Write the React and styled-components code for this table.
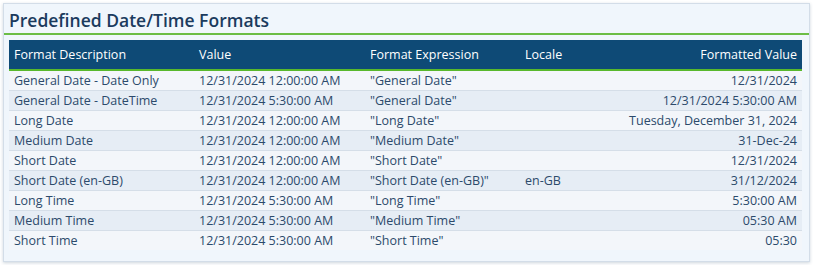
import styled, { createGlobalStyle } from 'styled-components';

const GlobalStyle = createGlobalStyle`
  body {
    margin: 0;
    background: #ffffff;
    font-family: "Open Sans", "Noto Sans", sans-serif;
  }
`;

const Page = styled.div`
  padding: 3px;
  width: 813px;
  box-sizing: border-box;
`;

const Panel = styled.div`
  width: 807px;
  height: 259px;
  box-sizing: border-box;
  background: #f0f6fc;
  border: 1px solid #d3dde8;
  box-shadow: 0 1px 3px rgba(60, 90, 120, 0.25);
`;

const Title = styled.h2`
  margin: 0;
  height: 31px;
  box-sizing: border-box;
  padding: 3px 0 0 5px;
  font-size: 17.5px;
  font-weight: 600;
  color: #1b3b5e;
  line-height: 26px;
  border-bottom: 2px solid #6cbd45;
`;

const Table = styled.table`
  margin: 5px 0 0 5px;
  width: 793px;
  border-collapse: collapse;
  font-size: 12.5px;
  color: #2c4a6b;
`;

const HeadRow = styled.tr`
  background: #0e4a76;
  border-bottom: 2px solid #58b82c;
`;

const Th = styled.th`
  height: 30px;
  padding: 0 5px 1px;
  text-align: ${(p) => (p.$right ? 'right' : 'left')};
  font-weight: 400;
  color: #ffffff;
  width: ${(p) => p.$w || 'auto'};
  box-sizing: border-box;
`;

const Row = styled.tr`
  background: ${(p) => (p.$alt ? '#e6edf5' : '#f3f6fa')};
  border-bottom: 1px solid #d5dee8;
  &:last-child {
    border-bottom: none;
  }
`;

const Td = styled.td`
  height: 19px;
  padding: 0 5px;
  line-height: 19px;
  white-space: nowrap;
  text-align: ${(p) => (p.$right ? 'right' : 'left')};
`;

const rows = [
  ['General Date - Date Only', '12/31/2024 12:00:00 AM', '"General Date"', '', '12/31/2024'],
  ['General Date - DateTime', '12/31/2024 5:30:00 AM', '"General Date"', '', '12/31/2024 5:30:00 AM'],
  ['Long Date', '12/31/2024 12:00:00 AM', '"Long Date"', '', 'Tuesday, December 31, 2024'],
  ['Medium Date', '12/31/2024 12:00:00 AM', '"Medium Date"', '', '31-Dec-24'],
  ['Short Date', '12/31/2024 12:00:00 AM', '"Short Date"', '', '12/31/2024'],
  ['Short Date (en-GB)', '12/31/2024 12:00:00 AM', '"Short Date (en-GB)"', 'en-GB', '31/12/2024'],
  ['Long Time', '12/31/2024 5:30:00 AM', '"Long Time"', '', '5:30:00 AM'],
  ['Medium Time', '12/31/2024 5:30:00 AM', '"Medium Time"', '', '05:30 AM'],
  ['Short Time', '12/31/2024 5:30:00 AM', '"Short Time"', '', '05:30'],
];

const App = () => {
  return (
    <Page>
      <GlobalStyle />
      <Panel>
        <Title>Predefined Date/Time Formats</Title>
        <Table>
          <thead>
            <HeadRow>
              <Th $w="185px">Format Description</Th>
              <Th $w="171px">Value</Th>
              <Th $w="155px">Format Expression</Th>
              <Th $w="100px">Locale</Th>
              <Th $right>Formatted Value</Th>
            </HeadRow>
          </thead>
          <tbody>
            {rows.map((r, i) => (
              <Row key={r[0]} $alt={i % 2 === 1}>
                <Td>{r[0]}</Td>
                <Td>{r[1]}</Td>
                <Td>{r[2]}</Td>
                <Td>{r[3]}</Td>
                <Td $right>{r[4]}</Td>
              </Row>
            ))}
          </tbody>
        </Table>
      </Panel>
    </Page>
  );
};

export default App;
